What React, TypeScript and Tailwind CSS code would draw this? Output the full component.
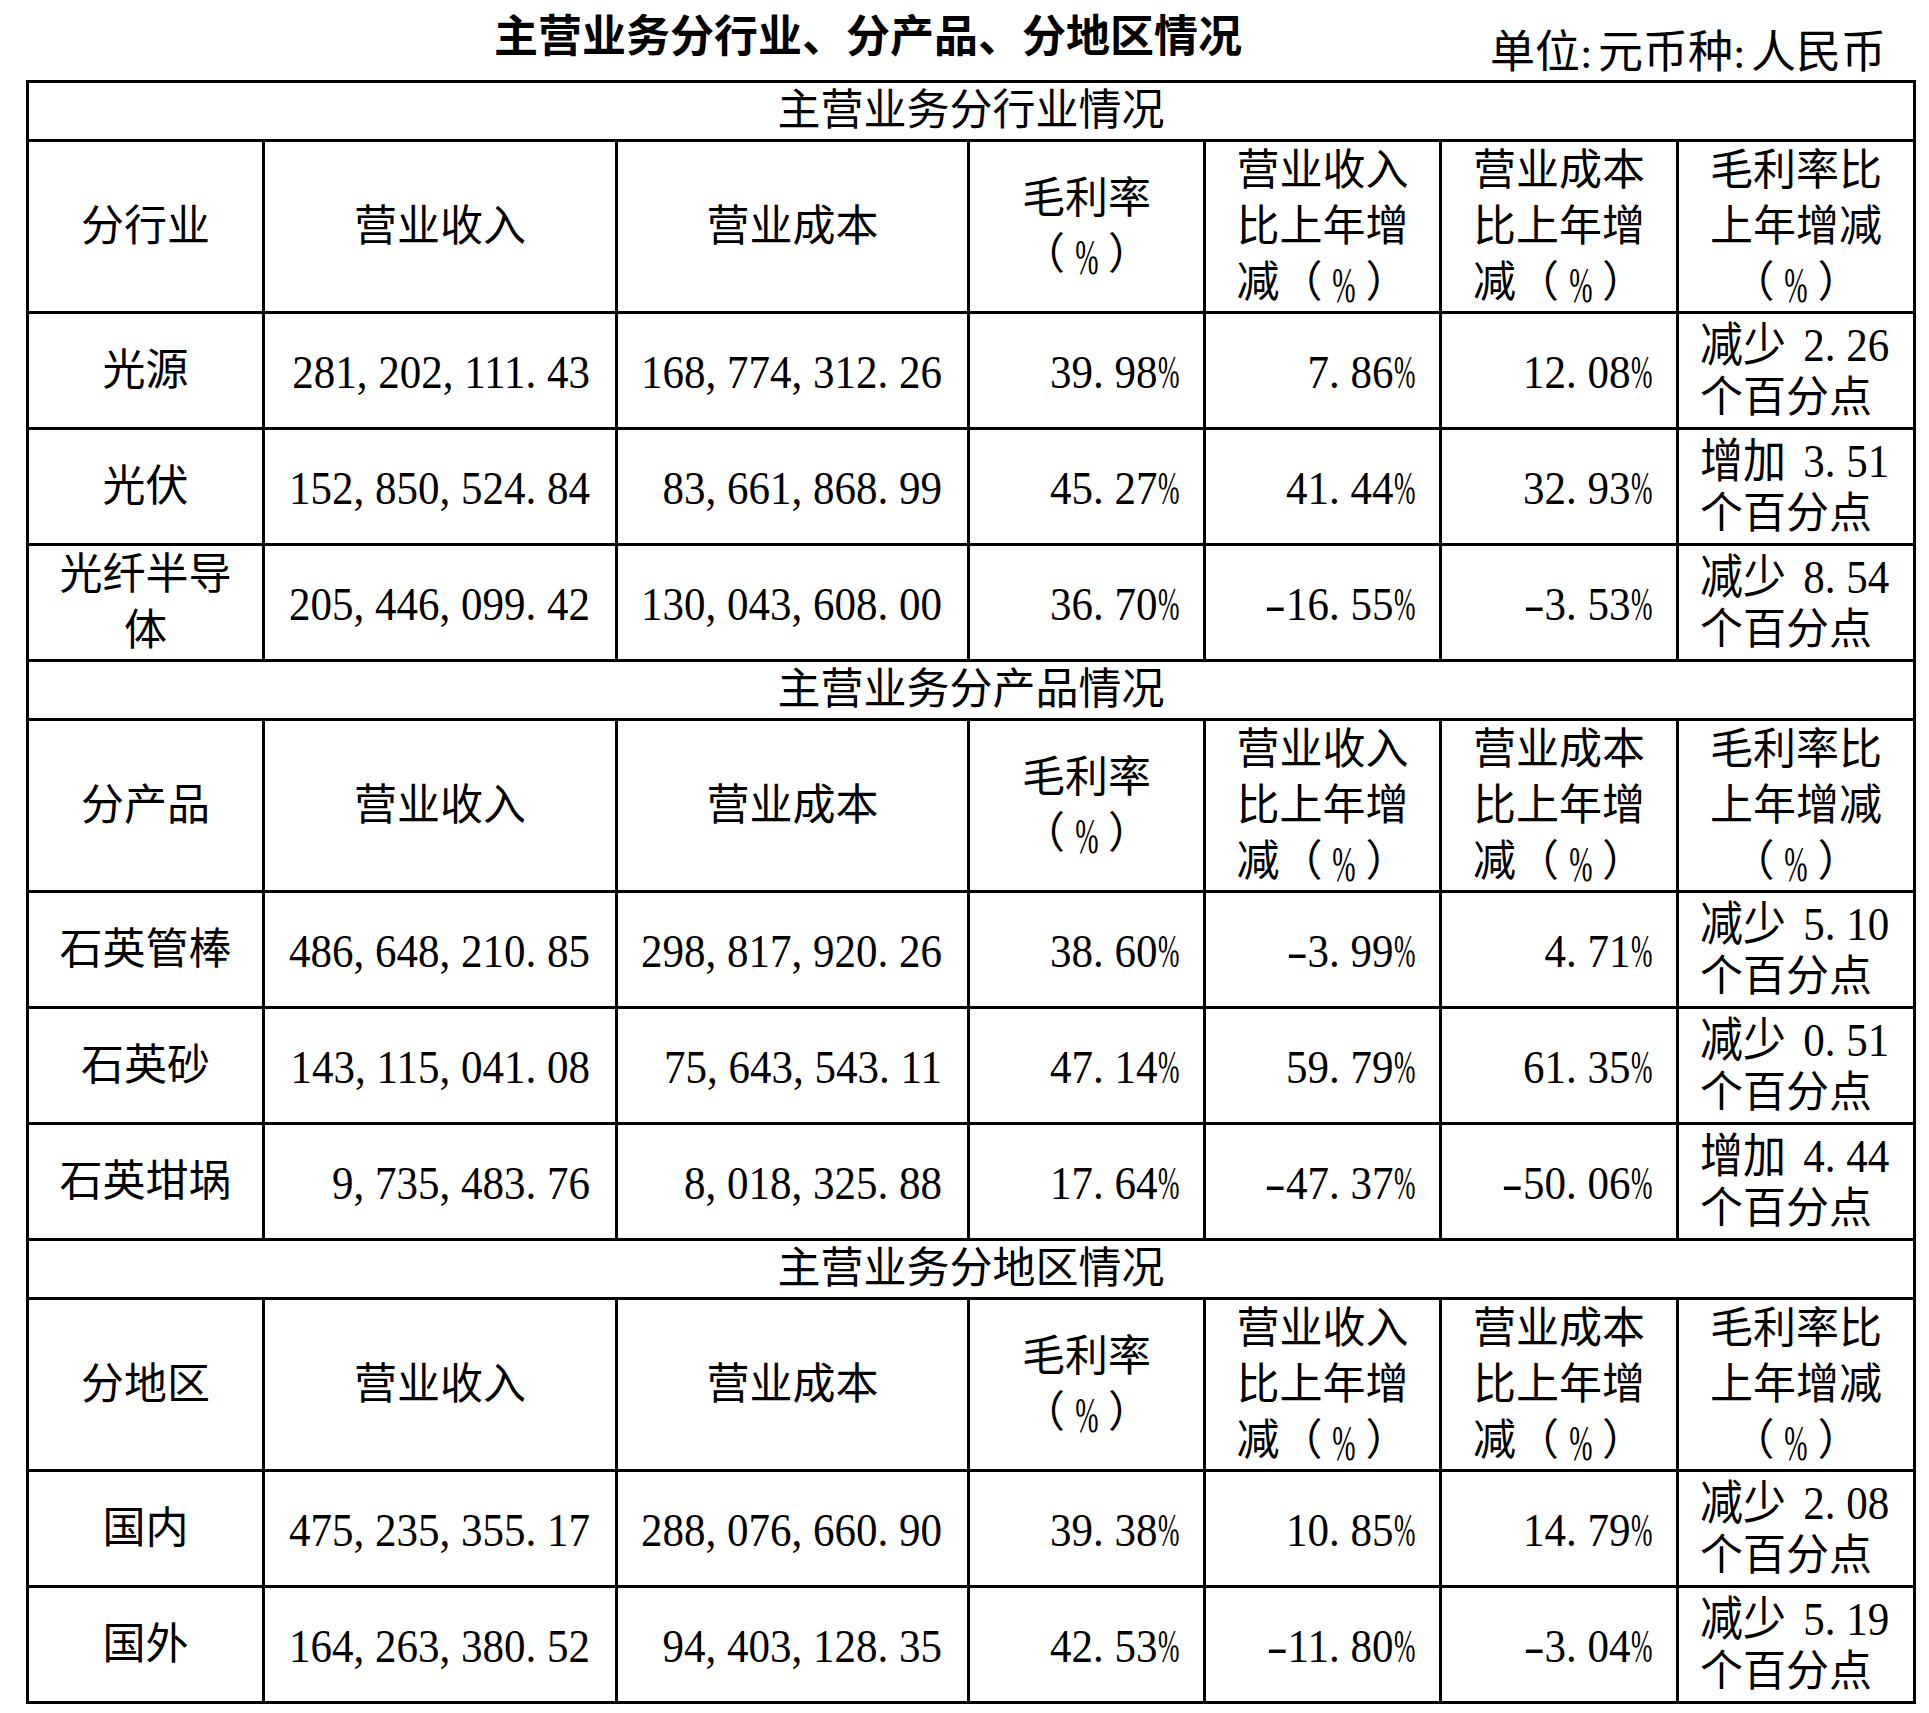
import React from "react";

type Row = {
  name: string[];
  revenue: string;
  cost: string;
  margin: string;
  revYoy: string;
  costYoy: string;
  marginYoy: [string, string];
};

const sections: { title: string; label: string; rows: Row[] }[] = [
  {
    title: "主营业务分行业情况",
    label: "分行业",
    rows: [
      { name: ["光源"], revenue: "281,202,111.43", cost: "168,774,312.26", margin: "39.98%", revYoy: "7.86%", costYoy: "12.08%", marginYoy: ["减少 2.26", "个百分点"] },
      { name: ["光伏"], revenue: "152,850,524.84", cost: "83,661,868.99", margin: "45.27%", revYoy: "41.44%", costYoy: "32.93%", marginYoy: ["增加 3.51", "个百分点"] },
      { name: ["光纤半导", "体"], revenue: "205,446,099.42", cost: "130,043,608.00", margin: "36.70%", revYoy: "-16.55%", costYoy: "-3.53%", marginYoy: ["减少 8.54", "个百分点"] },
    ],
  },
  {
    title: "主营业务分产品情况",
    label: "分产品",
    rows: [
      { name: ["石英管棒"], revenue: "486,648,210.85", cost: "298,817,920.26", margin: "38.60%", revYoy: "-3.99%", costYoy: "4.71%", marginYoy: ["减少 5.10", "个百分点"] },
      { name: ["石英砂"], revenue: "143,115,041.08", cost: "75,643,543.11", margin: "47.14%", revYoy: "59.79%", costYoy: "61.35%", marginYoy: ["减少 0.51", "个百分点"] },
      { name: ["石英坩埚"], revenue: "9,735,483.76", cost: "8,018,325.88", margin: "17.64%", revYoy: "-47.37%", costYoy: "-50.06%", marginYoy: ["增加 4.44", "个百分点"] },
    ],
  },
  {
    title: "主营业务分地区情况",
    label: "分地区",
    rows: [
      { name: ["国内"], revenue: "475,235,355.17", cost: "288,076,660.90", margin: "39.38%", revYoy: "10.85%", costYoy: "14.79%", marginYoy: ["减少 2.08", "个百分点"] },
      { name: ["国外"], revenue: "164,263,380.52", cost: "94,403,128.35", margin: "42.53%", revYoy: "-11.80%", costYoy: "-3.04%", marginYoy: ["减少 5.19", "个百分点"] },
    ],
  },
];

// half-width cells for punctuation, like the song-style font in the source
function T({ s, colon = "w-[0.5em]", space = "w-[0.5em]" }: { s: string; colon?: string; space?: string }) {
  return (
    <>
      {s.split("").map((c, i) => {
        if (c === ":")
          return (
            <span key={i} className={`inline-block text-left ${colon}`}>
              {c}
            </span>
          );
        if (c === " ")
          return (
            <span key={i} className={`inline-block text-left ${space}`}>
              {c}
            </span>
          );
        if (c === "," || c === ".")
          return (
            <span key={i} className="inline-block w-[0.5em] text-left">
              {c}
            </span>
          );
        if (c === "-")
          return (
            <span key={i} className="inline-block w-[0.5em] text-center">
              <span className="inline-block scale-x-[1.5]">-</span>
            </span>
          );
        if (c === "%")
          return (
            <span key={i} className="inline-block w-[0.5em] text-left">
              <span className="inline-block scale-x-[0.6] origin-left">%</span>
            </span>
          );
        return c;
      })}
    </>
  );
}

// tall narrow digits
function N({ s, space }: { s: string; space?: string }) {
  return (
    <span className="inline-block scale-y-[1.08] translate-y-[2px]">
      <T s={s} space={space} />
    </span>
  );
}

function Pct() {
  return (
    <>
      （
      <span className="inline-block w-[1em] text-center">
        <span className="inline-block scale-x-[0.65] scale-y-[1.2] translate-y-[2px]">%</span>
      </span>
      ）
    </>
  );
}

const cell = "border-[3px] border-black p-0 align-middle";

function HeaderRow({ label }: { label: string }) {
  return (
    <tr>
      <td className={`${cell} h-[172px] text-center`}>{label}</td>
      <td className={`${cell} text-center`}>营业收入</td>
      <td className={`${cell} text-center`}>营业成本</td>
      <td className={`${cell} text-center`}>
        <div>毛利率</div>
        <div>
          <Pct />
        </div>
      </td>
      <td className={`${cell} text-center`}>
        <div className="inline-block text-left">
          <div>营业收入</div>
          <div>比上年增</div>
          <div>
            减<Pct />
          </div>
        </div>
      </td>
      <td className={`${cell} text-center`}>
        <div className="inline-block text-left">
          <div>营业成本</div>
          <div>比上年增</div>
          <div>
            减<Pct />
          </div>
        </div>
      </td>
      <td className={`${cell} text-center`}>
        <div>毛利率比</div>
        <div>上年增减</div>
        <div>
          <Pct />
        </div>
      </td>
    </tr>
  );
}

export default function App() {
  return (
    <div className="w-[1929px] h-[1713px] bg-white text-black font-['Liberation_Serif','Noto_Sans_CJK_SC',serif]">
      <div className="ml-[26px] w-[1887px]">
        <div className="flex h-[80px] items-start">
          <div className="ml-[468px] mt-[16px] text-[44px] leading-none font-bold">
            主营业务分行业、分产品、分地区情况
          </div>
          <div className="ml-auto mr-[27px] mt-[31px] text-[45px] leading-none">
            <T s="单位:元币种:人民币" colon="w-[0.4em]" />
          </div>
        </div>

        <table className="table-fixed border-collapse w-[1887px] text-[43px] leading-[56px]">
          <colgroup>
            <col className="w-[236px]" />
            <col className="w-[353px]" />
            <col className="w-[352px]" />
            <col className="w-[236px]" />
            <col className="w-[236px]" />
            <col className="w-[237px]" />
            <col className="w-[237px]" />
          </colgroup>
          <tbody>
            {sections.map((sec) => (
              <React.Fragment key={sec.title}>
                <tr>
                  <td colSpan={7} className={`${cell} h-[58px] text-center`}>
                    {sec.title}
                  </td>
                </tr>
                <HeaderRow label={sec.label} />
                {sec.rows.map((r) => (
                  <tr key={r.name.join("")}>
                    <td className={`${cell} h-[116px] text-center`}>
                      {r.name.map((n) => (
                        <div key={n}>{n}</div>
                      ))}
                    </td>
                    <td className={`${cell} text-right pr-[25px] whitespace-nowrap`}>
                      <N s={r.revenue} />
                    </td>
                    <td className={`${cell} text-right pr-[25px] whitespace-nowrap`}>
                      <N s={r.cost} />
                    </td>
                    <td className={`${cell} text-right pr-[24px] whitespace-nowrap`}>
                      <N s={r.margin} />
                    </td>
                    <td className={`${cell} text-right pr-[24px] whitespace-nowrap`}>
                      <N s={r.revYoy} />
                    </td>
                    <td className={`${cell} text-right pr-[24px] whitespace-nowrap`}>
                      <N s={r.costYoy} />
                    </td>
                    <td className={`${cell} text-left pl-[21px] whitespace-nowrap leading-[54px]`}>
                      <div>
                        <N s={r.marginYoy[0]} space="w-[0.4em]" />
                      </div>
                      <div>{r.marginYoy[1]}</div>
                    </td>
                  </tr>
                ))}
              </React.Fragment>
            ))}
          </tbody>
        </table>
      </div>
    </div>
  );
}
